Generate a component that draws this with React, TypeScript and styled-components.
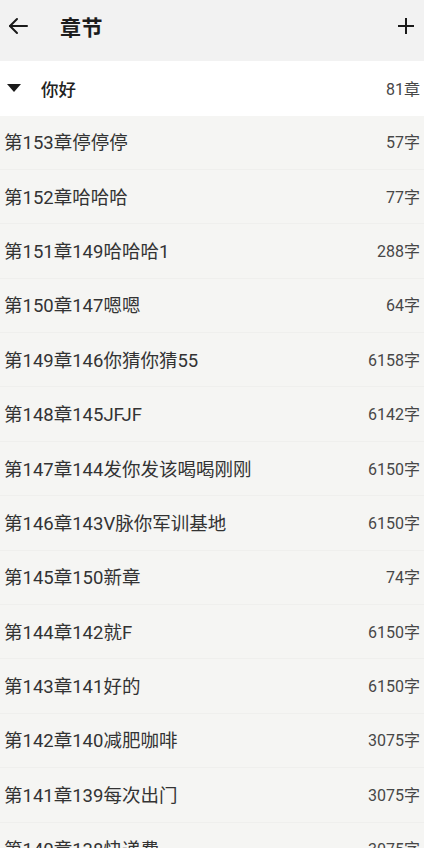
import styled, { createGlobalStyle } from "styled-components";

const GlobalStyle = createGlobalStyle`
  html, body {
    margin: 0;
    padding: 0;
    background: #f5f5f3;
    font-family: Roboto, "Noto Sans CJK SC", sans-serif;
  }
  * { box-sizing: border-box; }
`;

interface Chapter {
  title: string;
  words: number;
}

const chapters: Chapter[] = [
  { title: "第153章停停停", words: 57 },
  { title: "第152章哈哈哈", words: 77 },
  { title: "第151章149哈哈哈1", words: 288 },
  { title: "第150章147嗯嗯", words: 64 },
  { title: "第149章146你猜你猜55", words: 6158 },
  { title: "第148章145JFJF", words: 6142 },
  { title: "第147章144发你发该喝喝刚刚", words: 6150 },
  { title: "第146章143V脉你军训基地", words: 6150 },
  { title: "第145章150新章", words: 74 },
  { title: "第144章142就F", words: 6150 },
  { title: "第143章141好的", words: 6150 },
  { title: "第142章140减肥咖啡", words: 3075 },
  { title: "第141章139每次出门", words: 3075 },
  { title: "第140章138快递费", words: 3075 },
];

const Page = styled.div`
  width: 424px;
  height: 848px;
  overflow: hidden;
  background: #f5f5f3;
`;

const Header = styled.header`
  height: 61px;
  display: flex;
  align-items: center;
  padding: 0 8px 10px 8px;
  background: #f2f2f2;
`;

const IconButton = styled.button`
  width: 20px;
  height: 20px;
  padding: 0;
  border: 0;
  background: none;
  display: flex;
  align-items: center;
  justify-content: center;
  color: #1a1a1a;
`;

const Title = styled.h1`
  flex: 1;
  margin: 0 0 0 32px;
  font-size: 21px;
  font-weight: 700;
  color: #1c1c1c;
  letter-spacing: 0.5px;
`;

const GroupRow = styled.div`
  height: 54.5px;
  display: flex;
  align-items: center;
  padding: 0 4px 0 7px;
  background: #ffffff;
`;

const GroupName = styled.span`
  flex: 1;
  margin-left: 20px;
  font-size: 17.5px;
  font-weight: 500;
  color: #222;
`;

const Count = styled.span`
  font-size: 16px;
  color: #474747;
`;

const Row = styled.div`
  height: 54.4px;
  display: flex;
  align-items: center;
  padding: 0 4px 2px 4px;
  border-bottom: 1px solid #efefed;
`;

const RowTitle = styled.span`
  flex: 1;
  font-size: 18.5px;
  color: #333;
  white-space: nowrap;
`;

const Arrow = () => (
  <svg width="20" height="18" viewBox="0 0 20 18" fill="none" stroke="currentColor" strokeWidth="2" strokeLinecap="round" strokeLinejoin="round">
    <path d="M19 9H2" />
    <path d="M9 2L2 9l7 7" />
  </svg>
);

const Plus = () => (
  <svg width="16" height="16" viewBox="0 0 16 16" fill="none" stroke="currentColor" strokeWidth="2">
    <path d="M8 0v16" />
    <path d="M0 8h16" />
  </svg>
);

const Caret = () => (
  <svg width="14" height="8" viewBox="0 0 14 8">
    <path d="M0 0h14L7 8z" fill="#1a1a1a" />
  </svg>
);

export default function App() {
  return (
    <Page>
      <GlobalStyle />
      <Header>
        <IconButton>
          <Arrow />
        </IconButton>
        <Title>章节</Title>
        <IconButton>
          <Plus />
        </IconButton>
      </Header>
      <GroupRow>
        <Caret />
        <GroupName>你好</GroupName>
        <Count>81章</Count>
      </GroupRow>
      {chapters.map((c) => (
        <Row key={c.title}>
          <RowTitle>{c.title}</RowTitle>
          <Count>{c.words}字</Count>
        </Row>
      ))}
    </Page>
  );
}
